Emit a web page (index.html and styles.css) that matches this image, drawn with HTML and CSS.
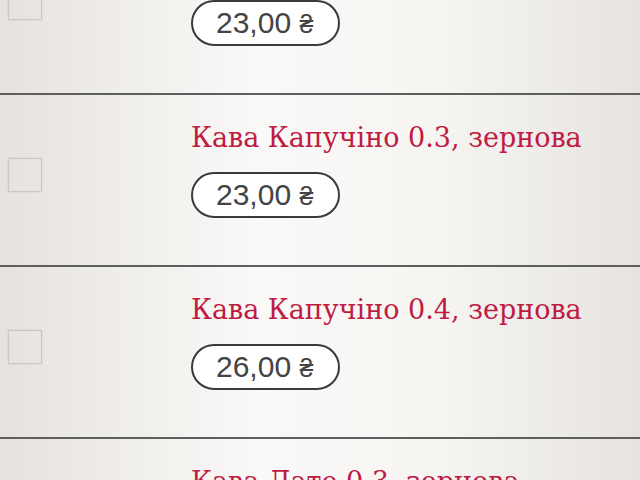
FILE: index.html
```html
<!DOCTYPE html>
<html lang="uk">
<head>
<meta charset="utf-8">
<title>Меню</title>
<link rel="stylesheet" href="styles.css">
</head>
<body>
<ul class="list">
  <li class="item">
    <span class="check"></span>
    <div class="info">
      <div class="title">Кава Капучіно 0.2, зернова</div>
      <div class="price">23,00 <span class="cur">₴</span></div>
    </div>
  </li>
  <li class="item">
    <span class="check"></span>
    <div class="info">
      <div class="title">Кава Капучіно 0.3, зернова</div>
      <div class="price">23,00 <span class="cur">₴</span></div>
    </div>
  </li>
  <li class="item">
    <span class="check"></span>
    <div class="info">
      <div class="title">Кава Капучіно 0.4, зернова</div>
      <div class="price">26,00 <span class="cur">₴</span></div>
    </div>
  </li>
  <li class="item">
    <span class="check"></span>
    <div class="info">
      <div class="title">Кава Лате 0.3, зернова</div>
      <div class="price">23,00 <span class="cur">₴</span></div>
    </div>
  </li>
</ul>
</body>
</html>
```
FILE: styles.css
```css
html, body {
  margin: 0;
  padding: 0;
  height: 100%;
  overflow: hidden;
}
body {
  background: linear-gradient(to right, #e6e3de 0%, #f1efec 22%, #faf9f8 40%, #f6f5f2 68%, #e7e4df 100%);
  background-attachment: fixed;
}
.list {
  list-style: none;
  margin: -77px 0 0 0;
  padding: 0;
}
.item {
  display: flex;
  align-items: flex-start;
  height: 170px;
  border-bottom: 2px solid #5e5e5e;
  box-sizing: content-box;
}
.check {
  flex: none;
  width: 32px;
  height: 32px;
  margin: 63px 0 0 8px;
  border: 1px solid #cbc8c3;
  box-shadow: 0 0 2px rgba(0,0,0,0.1), inset 0 0 1px rgba(0,0,0,0.08);
}
.info {
  margin-left: 149px;
  padding-top: 28px;
  display: flex;
  flex-direction: column;
  align-items: flex-start;
}
.title {
  font-family: "DejaVu Serif", serif;
  font-size: 27px;
  line-height: 30px;
  color: #c01b42;
}
.price {
  margin-top: 19px;
  height: 42px;
  padding: 0 25px 0 23px;
  border: 2px solid #3a3a3a;
  border-radius: 23px;
  background: #fff;
  font-family: "Liberation Sans", Arial, sans-serif;
  font-size: 30px;
  line-height: 42px;
  color: #444;
}
.cur {
  font-size: 25px;
}
```
